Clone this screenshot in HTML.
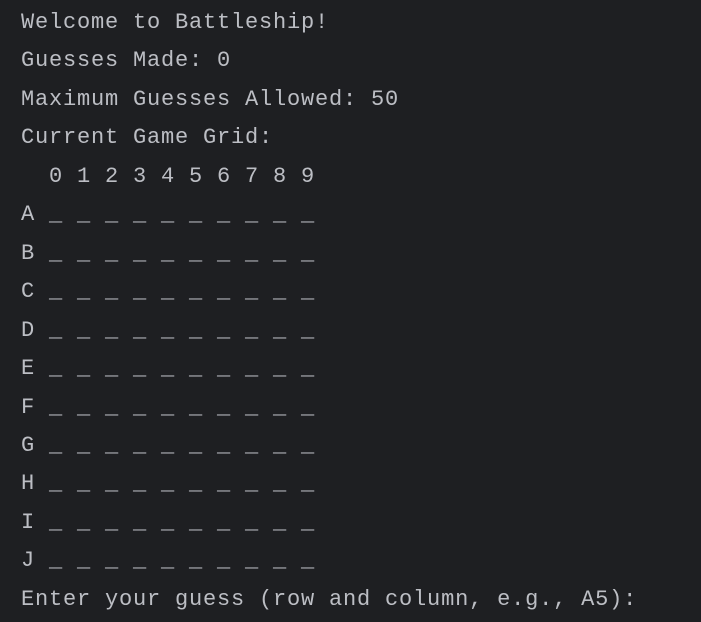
<!DOCTYPE html>
<html><head><style>
html,body{margin:0;padding:0;background:#1e1f22;width:701px;height:622px;overflow:hidden}
pre{margin:0;padding:4px 0 0 21px;font-family:"Liberation Mono",monospace;font-size:22px;letter-spacing:0.8px;line-height:38.45px;color:#bcbec4}
</style></head><body><pre>Welcome to Battleship!
Guesses Made: 0
Maximum Guesses Allowed: 50
Current Game Grid:
  0 1 2 3 4 5 6 7 8 9
A _ _ _ _ _ _ _ _ _ _
B _ _ _ _ _ _ _ _ _ _
C _ _ _ _ _ _ _ _ _ _
D _ _ _ _ _ _ _ _ _ _
E _ _ _ _ _ _ _ _ _ _
F _ _ _ _ _ _ _ _ _ _
G _ _ _ _ _ _ _ _ _ _
H _ _ _ _ _ _ _ _ _ _
I _ _ _ _ _ _ _ _ _ _
J _ _ _ _ _ _ _ _ _ _
Enter your guess (row and column, e.g., A5):</pre></body></html>
